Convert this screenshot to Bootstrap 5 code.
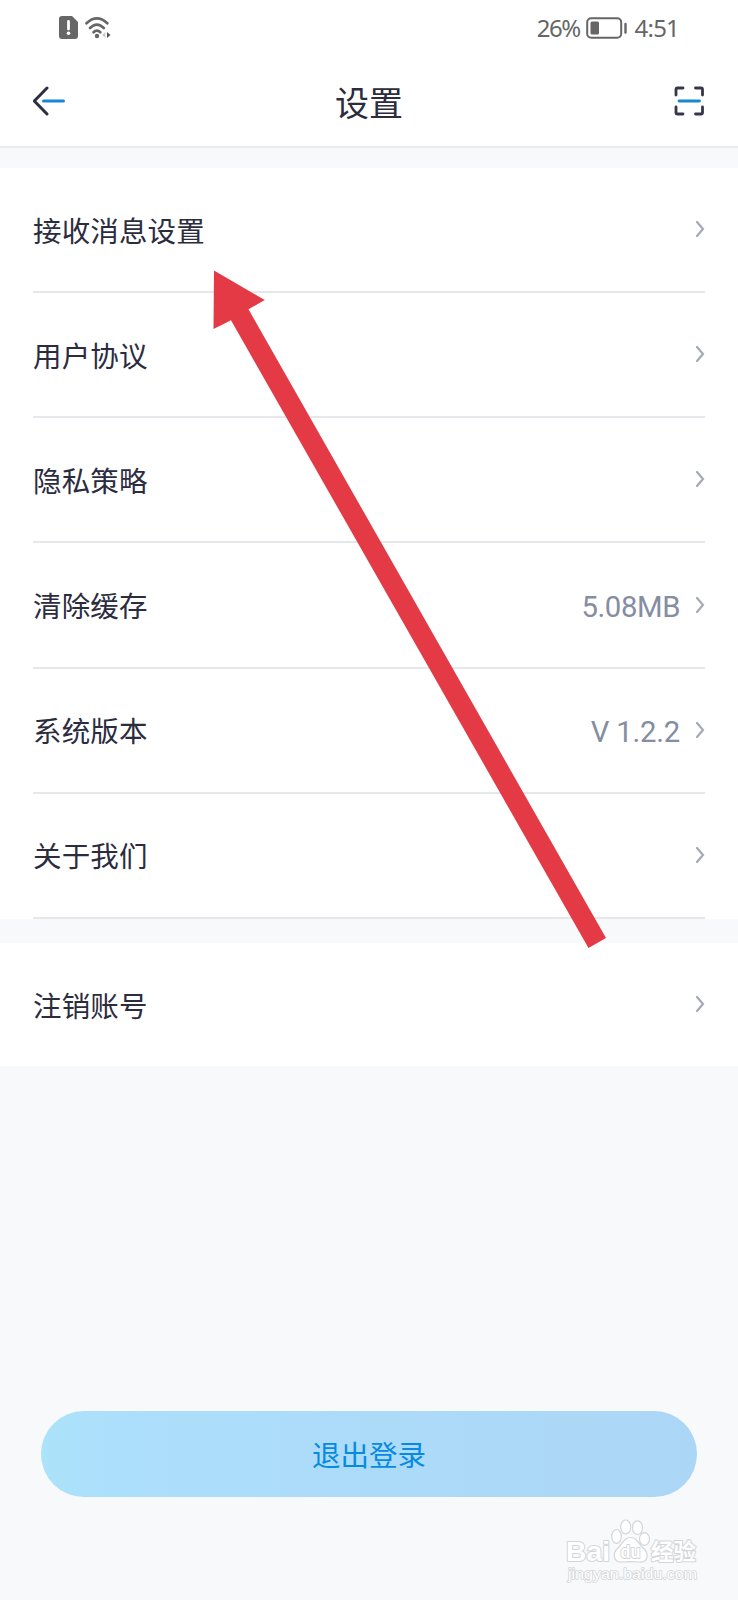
<!DOCTYPE html>
<html lang="zh-CN">
<head>
<meta charset="utf-8">
<meta name="viewport" content="width=device-width, initial-scale=1">
<title>设置</title>
<link href="https://cdn.jsdelivr.net/npm/bootstrap@5.3.0/dist/css/bootstrap.min.css" rel="stylesheet">
<style>
body{background:#f7f9fb;color:#2b2c3e;font-family:Roboto,"Noto Sans CJK SC",sans-serif;font-size:28.5px;line-height:1.4}
.screen{height:1600px;overflow:hidden}
.status-bar{height:56px;padding:0 59px 0 58px;color:#666;font-family:"Noto Sans",sans-serif;font-size:24px}
.status-bar svg,.app-header svg,.setting-row svg{display:block;flex:none}
.status-bar .battery-text{letter-spacing:-1.5px;margin-right:-2px}
.status-bar .clock-text{letter-spacing:-.8px;margin-left:7px}
.app-header{height:92px;border-bottom:2.5px solid #e9ebef;padding:0 33px 1px}
.app-header h1{font-size:34px;font-weight:400;line-height:1.4;padding-top:8px}
.settings{margin-top:20px;padding:0 33px}
.setting-row{height:125.17px;border-bottom:2px solid #e5e7ea;color:inherit;text-decoration:none}
.setting-row .title-text{padding-top:6px;letter-spacing:.15px}
.setting-row .value-text{color:#858da2;font-size:29.3px;margin-right:15px;padding-top:5px;line-height:1.2}
.setting-row svg{margin-bottom:1px}
.settings-account{margin-top:24.5px}
.settings-account .setting-row{height:123px;border:0}
.logout{height:86px;margin:344.5px 41px 0;border:0;padding:11px 0 5px;background:linear-gradient(90deg,#ace2fa 0%,#acdffb 12%,#acd6f5 100%);color:#078be0;font-size:28.5px}
.pointer{left:0;top:0;pointer-events:none}
.wm{left:560px;top:1512px}
.wm text{paint-order:stroke}
</style>
</head>
<body>
<main class="screen position-relative d-flex flex-column">
  <div class="bg-white">
    <div class="status-bar d-flex align-items-center justify-content-between">
      <div class="d-flex align-items-center">
        <svg width="56" height="26" viewBox="0 0 56 26">
          <path d="M4 1h10l6 6v14q0 3-3 3H4q-3 0-3-3V4q0-3 3-3z" fill="#666"/>
          <path d="M10.500 6.500v7.500" stroke="#fff" stroke-width="2.800" stroke-linecap="round"/>
          <circle cx="10.500" cy="18.300" r="1.800" fill="#fff"/>
          <g fill="none" stroke="#666" stroke-width="2.700" stroke-linecap="round"><path d="M28.500 8.300Q38.900-1.500 49.300 8.300"/><path d="M32 13Q38.900 6.200 45.800 13"/><path d="M35.500 17.300Q38.900 13.800 42.300 17.300"/></g>
          <circle cx="39" cy="21" r="2.200" fill="#666"/>
          <path d="M47.500 17v6l-3.500-3z" fill="#ccc"/><path d="M49 17v6l3.500-3z" fill="#555"/>
        </svg>
      </div>
      <div class="d-flex align-items-center">
        <span class="battery-text">26%</span>
        <svg class="ms-2" width="42" height="24" viewBox="0 0 42 24">
          <rect x="1.200" y="2.200" width="34" height="19.600" rx="4" fill="none" stroke="#666" stroke-width="2"/>
          <rect x="4.500" y="5.500" width="8.500" height="13" rx="1.500" fill="#666"/>
          <path d="M39.500 8v8.500" stroke="#666" stroke-width="2.400" stroke-linecap="round"/>
        </svg>
        <span class="clock-text">4:51</span>
      </div>
    </div>
    <header class="app-header d-flex align-items-center justify-content-between">
      <svg width="34" height="32" viewBox="0 0 34 32" fill="none" stroke-width="3" stroke-linecap="round" stroke-linejoin="round"><path d="M14 3 1.300 16 14 29" stroke="#2d2e40"/><path d="M10.500 16h20" stroke="#1588d1"/></svg>
      <h1 class="mb-0">设置</h1>
      <svg width="34" height="32" viewBox="0 0 34 32" fill="none" stroke-width="2.800" stroke-linecap="round" stroke-linejoin="round"><path d="M5 10V4.500q0-1.500 1.500-1.500H12M24.500 3H30q1.500 0 1.500 1.500V10M31.500 22v5.500q0 1.500-1.500 1.500h-5.500M12 29H6.500Q5 29 5 27.500V22" stroke="#35364a"/><path d="M8 16h20.500" stroke="#1588d1"/></svg>
    </header>
  </div>

  <section class="settings bg-white">
    <a class="setting-row d-flex align-items-center"><span class="title-text me-auto">接收消息设置</span><svg width="10" height="18" viewBox="0 0 10 18"><path d="M2 2l6 7-6 7" fill="none" stroke="#a4a9b7" stroke-width="2.200" stroke-linecap="round"/></svg></a>
    <a class="setting-row d-flex align-items-center"><span class="title-text me-auto">用户协议</span><svg width="10" height="18" viewBox="0 0 10 18"><path d="M2 2l6 7-6 7" fill="none" stroke="#a4a9b7" stroke-width="2.200" stroke-linecap="round"/></svg></a>
    <a class="setting-row d-flex align-items-center"><span class="title-text me-auto">隐私策略</span><svg width="10" height="18" viewBox="0 0 10 18"><path d="M2 2l6 7-6 7" fill="none" stroke="#a4a9b7" stroke-width="2.200" stroke-linecap="round"/></svg></a>
    <a class="setting-row d-flex align-items-center"><span class="title-text me-auto">清除缓存</span><span class="value-text" style="letter-spacing:-.4px">5.08MB</span><svg width="10" height="18" viewBox="0 0 10 18"><path d="M2 2l6 7-6 7" fill="none" stroke="#a4a9b7" stroke-width="2.200" stroke-linecap="round"/></svg></a>
    <a class="setting-row d-flex align-items-center"><span class="title-text me-auto">系统版本</span><span class="value-text" style="letter-spacing:-.2px">V 1.2.2</span><svg width="10" height="18" viewBox="0 0 10 18"><path d="M2 2l6 7-6 7" fill="none" stroke="#a4a9b7" stroke-width="2.200" stroke-linecap="round"/></svg></a>
    <a class="setting-row d-flex align-items-center"><span class="title-text me-auto">关于我们</span><svg width="10" height="18" viewBox="0 0 10 18"><path d="M2 2l6 7-6 7" fill="none" stroke="#a4a9b7" stroke-width="2.200" stroke-linecap="round"/></svg></a>
  </section>

  <section class="settings settings-account bg-white">
    <a class="setting-row d-flex align-items-center"><span class="title-text me-auto">注销账号</span><svg width="10" height="18" viewBox="0 0 10 18"><path d="M2 2l6 7-6 7" fill="none" stroke="#a4a9b7" stroke-width="2.200" stroke-linecap="round"/></svg></a>
  </section>

  <button type="button" class="btn logout rounded-pill">退出登录</button>

  <svg class="pointer position-absolute" width="738" height="960" viewBox="0 0 738 960"><path d="M214 270.500 264.700 300 248.500 309.300 606 938 588.500 948 231 320.300 213.500 329z" fill="#e33a45"/></svg>

  <svg class="wm position-absolute" width="150" height="76" viewBox="0 0 150 76" fill="#fff" stroke="#d3d5d8" stroke-width="2" stroke-linejoin="round">
    <text x="6" y="48.500" font-family="Liberation Sans" font-weight="700" font-size="28" textLength="44" lengthAdjust="spacingAndGlyphs">Bai</text>
    <g stroke-width="1.200"><ellipse cx="56.500" cy="24.500" rx="4.800" ry="7"/><ellipse cx="65.700" cy="15" rx="5" ry="7"/><ellipse cx="77.500" cy="15.700" rx="5" ry="6.800"/><ellipse cx="84.500" cy="27" rx="5" ry="6.300"/>
    <path d="M70.500 25.500c7 0 8 6.500 12 10 8 7 4.500 15-2.500 14.500-5-.5-13-.5-18 0-8 .5-11-8-3.500-14.500 4-3.500 5-10 12-10z"/></g>
    <text x="60.500" y="46" font-family="Liberation Sans" font-weight="700" font-size="19" textLength="20" lengthAdjust="spacingAndGlyphs">du</text>
    <text x="91" y="47.500" font-family="Noto Sans CJK SC" font-weight="700" font-size="22.500" textLength="45" lengthAdjust="spacingAndGlyphs">经验</text>
    <text x="8" y="67" font-family="Liberation Sans" font-size="15" stroke-width="1.500" textLength="129" lengthAdjust="spacingAndGlyphs">jingyan.baidu.com</text>
  </svg>
</main>
<script src="https://cdn.jsdelivr.net/npm/bootstrap@5.3.0/dist/js/bootstrap.bundle.min.js"></script>
</body>
</html>
